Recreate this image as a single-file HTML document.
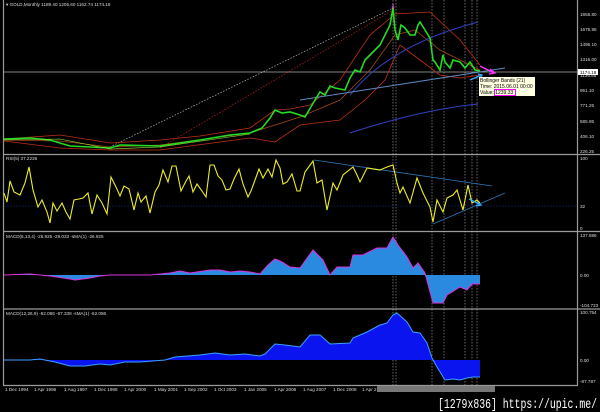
<!DOCTYPE html>
<html><head><style>html,body{margin:0;padding:0;background:#000;width:600px;height:412px;overflow:hidden}svg{display:block}</style></head><body>
<svg width="600" height="412" viewBox="0 0 600 412" xmlns="http://www.w3.org/2000/svg" font-family="Liberation Sans, sans-serif">
<rect width="600" height="412" fill="#000"/>
<g stroke="#9a9a9a" stroke-width="1.2">
<line x1="3.5" y1="0" x2="3.5" y2="385"/>
<line x1="577.5" y1="0" x2="577.5" y2="385"/>
<line x1="3" y1="154.5" x2="600" y2="154.5"/>
<line x1="3" y1="231.5" x2="600" y2="231.5"/>
<line x1="3" y1="309" x2="600" y2="309"/>
<line x1="3" y1="385.5" x2="578" y2="385.5"/>
</g>
<line x1="4" y1="72" x2="577" y2="72" stroke="#aaa" stroke-width="0.8"/>
<g stroke="#ccc" stroke-width="0.5" stroke-dasharray="1.5,1.5">
<line x1="393" y1="0" x2="393" y2="385"/><line x1="396" y1="0" x2="396" y2="385"/>
<line x1="432" y1="0" x2="432" y2="385"/><line x1="444" y1="0" x2="444" y2="385"/>
<line x1="465" y1="0" x2="465" y2="385"/><line x1="472" y1="0" x2="472" y2="385"/><line x1="477" y1="0" x2="477" y2="385"/>
</g>
<!-- main pane -->
<line x1="110" y1="147" x2="393" y2="8" stroke="#bbb" stroke-width="0.7" stroke-dasharray="1.5,1.5"/>
<line x1="160" y1="148" x2="393" y2="10" stroke="#c02020" stroke-width="0.7" stroke-dasharray="1.5,1.5"/>
<polyline fill="none" stroke="#c03018" stroke-width="0.8" points="4,139 60,135 110,143 160,140 200,136 250,128 275,110 290,109 310,105 340,80 370,35 395,14 430,12 460,40 480,65"/>
<polyline fill="none" stroke="#c03018" stroke-width="0.8" points="4,141 60,148 110,150 160,150 250,138 275,142 300,125 340,120 365,100 385,80 400,45 420,60 440,75 460,78 480,75"/>
<polyline fill="none" stroke="#a04818" stroke-width="0.8" points="4,140 60,141 110,147 160,145 250,133 275,125 300,117 340,100 370,70 395,35 415,30 440,50 460,60 480,70"/>
<path d="M350,133 Q420,110 478,104" fill="none" stroke="#3040c0" stroke-width="1"/>
<path d="M350,95 Q390,45 478,22" fill="none" stroke="#3040c0" stroke-width="1"/>
<line x1="300" y1="100" x2="505" y2="68" stroke="#5a8cc8" stroke-width="1"/>
<polyline fill="none" stroke="#22dd22" stroke-width="1.6" points="4,139 30,138 50,140 70,146 110,148 120,145 160,146 200,140 230,135 250,133 262,128 270,118 275,110 282,113 290,112 300,115 305,117 315,100 320,92 325,95 330,86 335,88 345,90 350,78 355,70 360,72 365,60 370,55 375,50 380,45 385,35 390,25 393,8 395,30 398,40 401,25 405,28 410,35 415,35 418,25 420,22 425,30 430,38 433,60 435,62 440,70 443,55 445,62 450,68 453,60 460,62 465,68 470,62 475,70 480,71"/>
<polyline fill="none" stroke="#aaee44" stroke-width="0.6" points="4,140 60,139 110,149 160,147 250,134"/>
<path d="M480,66 L494,73 M490,69 L495,73 L489,74" stroke="#ff33ff" stroke-width="1.3" fill="none"/>
<path d="M470,80 L482,75 M478,74 L482,75 L480,79" stroke="#33aaff" stroke-width="1.3" fill="none"/>
<text x="393" y="9" fill="#ff66ff" font-size="7" text-anchor="middle">⇓</text>
<rect x="479" y="77" width="56" height="19" fill="#ffffe1"/>
<g font-size="5" fill="#000"><text x="480" y="82">Bollinger Bands (21)</text><text x="480" y="88">Time: 2015.06.01 00:00</text><text x="480" y="94">Value: 1239.33</text></g>
<rect x="494.5" y="89.5" width="21" height="6" fill="none" stroke="#ff00ff" stroke-width="1"/>
<!-- RSI -->
<line x1="4" y1="206" x2="577" y2="206" stroke="#1a2a7a" stroke-width="0.6" stroke-dasharray="2,1"/>
<line x1="314" y1="160" x2="492" y2="186" stroke="#2a78b8" stroke-width="0.8"/>
<line x1="433" y1="224" x2="505" y2="193" stroke="#2a78b8" stroke-width="0.8"/>
<polyline fill="none" stroke="#eeee22" stroke-width="1.1" points="4,193 7,202 10,181 14,192 20,195 25,183 29,167 33,190 38,207 42,200 47,212 50,223 53,203 57,211 62,203 66,212 70,219 74,200 79,199 83,198 88,193 92,214 97,195 102,203 107,214 111,177 116,187 120,196 124,186 129,189 134,210 138,193 141,202 146,196 150,213 155,192 159,185 163,170 168,182 172,166 176,166 181,191 186,181 189,176 193,192 197,184 202,191 206,197 210,165 214,165 218,176 222,180 226,190 230,189 234,179 239,169 243,184 248,197 251,191 255,180 259,169 263,178 268,169 272,177 276,160 280,168 283,184 287,182 292,174 297,191 300,191 305,172 313,161 317,183 322,180 327,210 333,183 337,190 343,175 353,167 357,175 360,182 367,168 380,170 387,167 393,165 397,183 400,193 403,187 410,203 417,178 423,193 430,207 433,222 437,200 443,212 447,198 453,195 457,190 463,210 468,185 472,203 477,200 480,203"/>
<path d="M469,199 L481,205 M477,202 L481,205 L476,206" stroke="#33aaff" stroke-width="1.3" fill="none"/>
<!-- MACD1 -->
<polygon fill="#2a8ae0" points="4,275 4,275 30,274 50,276 70,279 75,280 90,278 100,276 110,275 130,275 150,275 170,273 180,271 190,273 210,270 220,270 230,272 240,271 250,272 260,274 268,265 275,259 282,262 290,267 300,268 313,250 323,260 330,275 337,267 350,267 353,255 363,255 377,248 387,248 393,237 398,245 407,257 413,268 418,263 425,273 433,303 443,303 447,295 460,287 467,290 472,284 480,284 480,275"/>
<polyline fill="none" stroke="#dd33dd" stroke-width="1" points="4,275 30,274 50,276 70,279 75,280 90,278 100,276 110,275 130,275 150,275 170,273 180,271 190,273 210,270 220,270 230,272 240,271 250,272 260,274 268,265 275,259 282,262 290,267 300,268 313,250 323,260 330,275 337,267 350,267 353,255 363,255 377,248 387,248 393,237 398,245 407,257 413,268 418,263 425,273 433,303 443,303 447,295 460,287 467,290 472,284 480,284"/>
<!-- MACD2 -->
<polygon fill="#0a14ee" points="4,360 30,360 40,359 55,362 70,366 85,366 100,364 110,365 125,362 140,362 165,360 175,357 200,355 215,353 230,355 245,354 260,356 265,354 275,344 285,345 300,347 310,335 320,335 330,344 350,343 353,338 367,332 380,325 387,323 393,315 397,313 407,322 413,332 420,333 427,343 432,358 437,367 445,380 453,379 460,380 467,378 473,377 480,377 480,360"/>
<polyline fill="none" stroke="#3aa0ff" stroke-width="1" points="4,360 30,360 40,359 55,362 70,366 85,366 100,364 110,365 125,362 140,362 165,360 175,357 200,355 215,353 230,355 245,354 260,356 265,354 275,344 285,345 300,347 310,335 320,335 330,344 350,343 353,338 367,332 380,325 387,323 393,315 397,313 407,322 413,332 420,333 427,343 432,358 437,367 445,380 453,379 460,380 467,378 473,377 480,377"/>
<!-- labels -->
<g fill="#ddd" font-size="4.6">
<text x="6" y="6">▾ GOLD,Monthly  1189.40 1205.60 1162.74 1174.18</text>
<text x="6" y="160">RSI(5) 37.2236</text>
<text x="6" y="238">MACD(6,13,4) -26.925 -29.033 -sMA(1) -26.925</text>
<text x="6" y="315">MACD(12,26,9) -62.086 -67.338 -sMA(1) -62.086</text>
<text x="580" y="16">1855.80</text><text x="580" y="31">1675.95</text><text x="580" y="46">1496.10</text><text x="580" y="61">1316.00</text>
<text x="580" y="77">1136.55</text><text x="580" y="92">951.10</text><text x="580" y="107">771.25</text><text x="580" y="123">585.95</text><text x="580" y="138">406.10</text><text x="580" y="153">226.25</text>
<text x="580" y="160">100</text><text x="580" y="208">32</text><text x="580" y="230">0</text>
<text x="580" y="237">137.886</text><text x="580" y="277">0.00</text><text x="580" y="307">-104.733</text>
<text x="580" y="314">100.754</text><text x="580" y="362">0.00</text><text x="580" y="383">-87.787</text>
</g>
<rect x="578" y="69" width="20" height="6" fill="#fff"/><text x="580" y="74" font-size="4.6" fill="#000">1174.18</text>
<g fill="#ddd" font-size="4.6">
<text x="5" y="391">1 Dec 1994</text><text x="34" y="391">1 Apr 1996</text><text x="64" y="391">1 Aug 1997</text><text x="94" y="391">1 Dec 1998</text><text x="124" y="391">1 Apr 2000</text><text x="154" y="391">1 May 2001</text><text x="184" y="391">1 Sep 2002</text><text x="214" y="391">1 Oct 2003</text><text x="244" y="391">1 Jan 2005</text><text x="274" y="391">1 Apr 2006</text><text x="303" y="391">1 Aug 2007</text><text x="333" y="391">1 Dec 2008</text><text x="362" y="391">1 Apr 2</text>
</g>
<rect x="377" y="386" width="118" height="6" fill="#777"/>
<text x="438" y="408" fill="#fff" font-size="14" font-family="Liberation Mono, monospace" textLength="159" lengthAdjust="spacingAndGlyphs">[1279x836] https://upic.me/</text>
</svg>
</body></html>
